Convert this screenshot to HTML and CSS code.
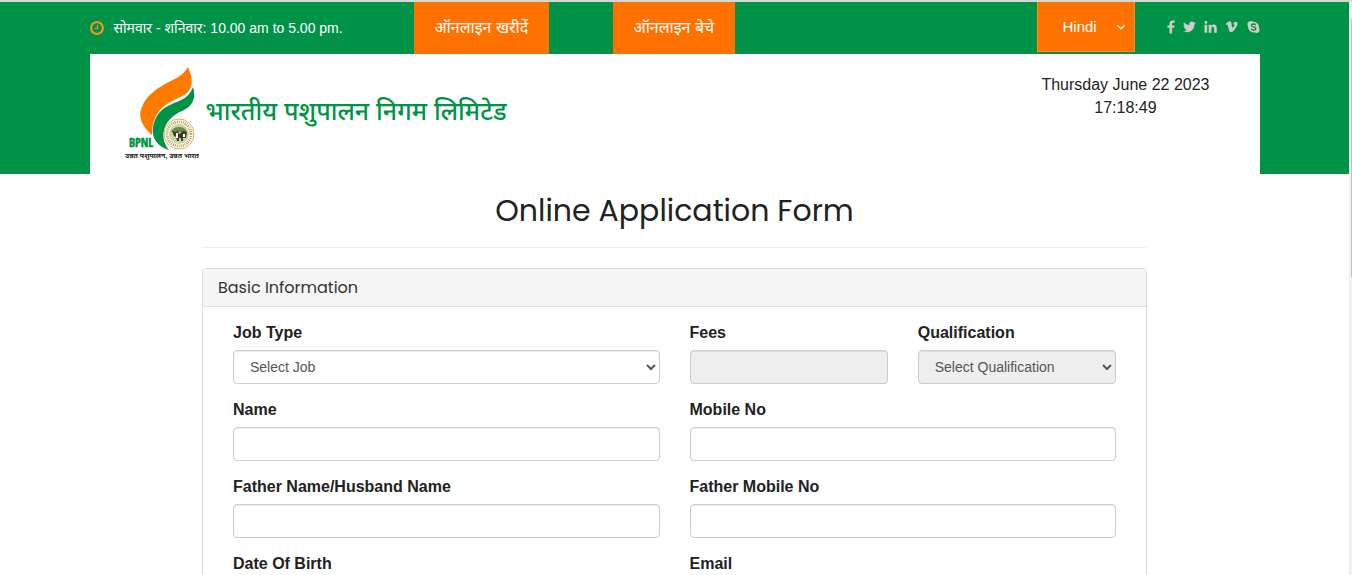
FILE: index.html
```html
<!DOCTYPE html>
<html lang="hi">
<head>
    <meta charset="UTF-8">
    <meta name="viewport" content="width=device-width, initial-scale=1.0">
    <title>Online Application Form</title>
    <link rel="stylesheet" href="styles.css">
</head>
<body>
    <header class="site-header">
        <div class="container topbar">
            <div class="hours">
                <svg class="clock" viewBox="0 0 14 14" aria-hidden="true">
                    <circle cx="7" cy="7" r="5.9" fill="none" stroke="currentColor" stroke-width="2.1"/>
                    <path d="M7.5 3.8v3.7H4.6" fill="none" stroke="currentColor" stroke-width="1.1"/>
                </svg>
                <span>सोमवार - शनिवार: 10.00 am to 5.00 pm.</span>
            </div>
            <a class="top-btn" href="#buy">ऑनलाइन खरीदें</a>
            <a class="top-btn" href="#sell">ऑनलाइन बेचे</a>
            <button class="lang" type="button">Hindi
                <svg viewBox="0 0 10 6" aria-hidden="true"><path d="M1.4 1.2L5 4.7l3.6-3.5" fill="none" stroke="currentColor" stroke-width="1.4"/></svg>
            </button>
            <nav class="social" aria-label="Social">
                <a href="#facebook" aria-label="Facebook">
                    <svg width="8" height="14" viewBox="0 0 8 14"><path d="M7.6.6v2.1H6.3c-1 0-1.2.5-1.2 1.2v1.5h2.4l-.3 2.4H5.1V13.5H2.5V7.8H.4V5.4h2.1V3.6C2.5 1.5 3.8.4 5.7.4c.9 0 1.6.1 1.9.2z"/></svg>
                </a>
                <a href="#twitter" aria-label="Twitter">
                    <svg width="13" height="14" viewBox="0 0 13 14"><path d="M12.7 3.1c-.4.5-.8.9-1.3 1.3v.3c0 3.5-2.7 7.5-7.5 7.5-1.5 0-2.9-.4-3.9-1.2 1.4.1 2.8-.2 3.9-1.1-1.2 0-2.2-.8-2.5-1.8.4.1.8.1 1.2-.1C1.4 7.8.5 6.7.5 5.4c.4.2.8.3 1.2.3C.5 4.8.2 3.4.9 2.2c1.3 1.6 3.2 2.6 5.4 2.7C5.9 3.1 7.2 1.6 8.9 1.6c.8 0 1.4.3 1.9.8.6-.1 1.2-.3 1.7-.6-.2.6-.6 1.1-1.2 1.5.5-.1 1-.2 1.4-.2z"/></svg>
                </a>
                <a href="#linkedin" aria-label="LinkedIn">
                    <svg width="13" height="14" viewBox="0 0 13 14"><path d="M.5 4.8h2.7v8H.5zM1.9 1c.9 0 1.5.6 1.5 1.4s-.6 1.4-1.5 1.4S.4 3.2.4 2.4 1 1 1.9 1zM4.7 4.8h2.7v1.1c.4-.6 1-1.3 2.4-1.3 1.8 0 3 1.2 3 3.6v4.6h-2.7V8.5c0-1.1-.4-1.8-1.3-1.8s-1.4.7-1.4 1.6v4.5H4.7z"/></svg>
                </a>
                <a href="#vimeo" aria-label="Vimeo">
                    <svg width="13" height="14" viewBox="0 0 13 14"><path d="M12.5 4.1c-.1 1.2-.9 2.8-2.5 4.9-1.6 2.2-3 3.2-4.2 3.2-.7 0-1.3-.7-1.8-2L3 6.5C2.7 5.2 2.3 4.5 2 4.5c-.1 0-.4.2-.9.6L.5 4.3C1.3 3.6 2.1 2.8 2.9 2.1c1-.9 1.7-1 2.1-.9.8.1 1.3.8 1.5 2 .5 3.5.8 4.4 1.2 4.4.3 0 .8-.5 1.5-1.5.6-1 .5-1.9-.4-1.9-.3 0-.5 0-.8.2.5-1.9 1.6-2.8 3.1-2.7 1.1 0 1.5.8 1.4 2.4z"/></svg>
                </a>
                <a href="#skype" aria-label="Skype">
                    <svg width="13" height="14" viewBox="0 0 13 14"><path d="M4 1c.8 0 1.5.3 2.1.7A5.6 5.6 0 0 1 12 7.9 3.3 3.3 0 0 1 9.5 13c-.8 0-1.5-.3-2-.7A5.6 5.6 0 0 1 1 6.1 3.3 3.3 0 0 1 4 1z"/><path class="skype-s" d="M8.7 5.1C8.3 4.3 7.4 4 6.5 4c-1.1 0-2 .5-2 1.4 0 2.1 4.3.9 4.3 3 0 1-.9 1.6-2.2 1.6-1.2 0-2.2-.4-2.5-1.4"/></svg>
                </a>
            </nav>
        </div>

        <div class="container masthead">
            <a class="brand" href="#home">
                <svg class="logo" viewBox="0 0 82 96" role="img" aria-label="BPNL">
                    <path fill="#ff7a00" d="M66 1C72 14 71 24 62 29C53 34 46 36 40 42C33 49 30 57 30 69C22 62 15 52 20 41C24 30 33 24 43 18C52 13 60 11 66 1Z"/>
                    <path fill="#009347" d="M71 21C75 34 69 41 60 45C51 49 46 54 43 61C40 69 41 77 47 84C36 81 29 72 31 61C33 49 40 42 50 38C59 34 67 32 71 21Z"/>
                    <circle cx="57" cy="68" r="15" fill="#fff" stroke="#d8b25a"/>
                    <circle cx="57" cy="68" r="12" fill="none" stroke="#b7a064" stroke-width="3" stroke-dasharray="1 1"/>
                    <circle cx="57" cy="68" r="10" fill="#c9d49a"/>
                    <path fill="#6d8a45" d="M49 66q2-5 8-5t8 5z"/>
                    <path fill="#3c3a33" d="M50 65l3 1 3-1 1 3 4-3 4 1-1 6h-3v3h-2v-3h-2v3h-2l-1-4-2-1z"/>
                    <path fill="#fff" d="M54 67h2v5h-2zM61 68h2v3h-2z"/>
                    <text class="logo-name" x="7" y="81">BPNL</text>
                    <text class="logo-motto" x="40" y="92" text-anchor="middle">उन्नत पशुपालन, उन्नत भारत</text>
                </svg>
                <span class="brand-name">भारतीय पशुपालन निगम लिमिटेड</span>
            </a>
            <div class="clock-text">
                <div>Thursday June 22 2023</div>
                <div>17:18:49</div>
            </div>
        </div>
    </header>

    <main class="form-wrap">
        <h1>Online Application Form</h1>
        <form class="panel">
            <h2 class="panel-heading">Basic Information</h2>
            <div class="panel-body">
                <div class="field wide">
                    <label for="job">Job Type</label>
                    <select id="job" class="form-control"><option>Select Job</option></select>
                </div>
                <div class="field">
                    <label for="fees">Fees</label>
                    <input id="fees" class="form-control" type="text" readonly>
                </div>
                <div class="field">
                    <label for="qualification">Qualification</label>
                    <select id="qualification" class="form-control" disabled><option>Select Qualification</option></select>
                </div>
                <div class="field wide">
                    <label for="name">Name</label>
                    <input id="name" class="form-control" type="text">
                </div>
                <div class="field wide">
                    <label for="mobile">Mobile No</label>
                    <input id="mobile" class="form-control" type="text">
                </div>
                <div class="field wide">
                    <label for="father">Father Name/Husband Name</label>
                    <input id="father" class="form-control" type="text">
                </div>
                <div class="field wide">
                    <label for="father-mobile">Father Mobile No</label>
                    <input id="father-mobile" class="form-control" type="text">
                </div>
                <div class="field wide">
                    <label for="dob">Date Of Birth</label>
                    <input id="dob" class="form-control" type="text">
                </div>
                <div class="field wide">
                    <label for="email">Email</label>
                    <input id="email" class="form-control" type="text">
                </div>
            </div>
        </form>
    </main>
    <div class="scroll-track"><div class="scroll-thumb"></div></div>
</body>
</html>
```
FILE: styles.css
```css
* {
    box-sizing: border-box;
}
html {
    scrollbar-width: none;
}
body {
    margin: 0;
    padding-right: 3px;
    border-top: 2px solid #d5dad8;
    background-color: #fff;
    color: #222;
    font-family: "Liberation Sans", Arial, "Noto Sans Devanagari", "Noto Sans", sans-serif;
    font-size: 16px;
    line-height: 23px;
}
a {
    color: inherit;
    text-decoration: none;
}
.container {
    max-width: 1170px;
    margin: 0 auto;
}
.site-header {
    background-color: #009347;
}
.topbar {
    display: grid;
    grid-template-columns: 324px 199px 1fr 98px 125px;
    align-items: start;
    height: 52px;
    color: #fff;
}
.hours {
    display: flex;
    align-items: center;
    gap: 10px;
    height: 52px;
    font-size: 14px;
}
.clock {
    width: 14px;
    height: 14px;
    color: #f7941d;
}
.top-btn {
    justify-self: start;
    padding: 0 21px;
    background-color: #ff7200;
    line-height: 52px;
}
.lang {
    display: flex;
    align-items: center;
    justify-content: space-between;
    height: 50px;
    padding: 0 8px 0 25px;
    border: 1px solid #ff8a1f;
    border-top: 0;
    background-color: #ff7200;
    color: #fff;
    font: inherit;
    font-size: 15px;
}
.lang svg {
    width: 10px;
    height: 6px;
}
.social {
    display: flex;
    align-items: center;
    justify-content: space-between;
    height: 50px;
    padding-left: 32px;
}
.social svg {
    display: block;
    fill: #ccc;
}
.social .skype-s {
    fill: none;
    stroke: #009347;
    stroke-width: 1.3;
}
.masthead {
    display: flex;
    justify-content: space-between;
    height: 120px;
    padding: 12px 50px 0 32px;
    background-color: #fff;
}
.brand {
    display: flex;
    align-items: flex-start;
    gap: 2px;
}
.logo {
    width: 82px;
    height: 96px;
}
.logo-name {
    fill: #009347;
    stroke: #009347;
    stroke-width: 0.5;
    font-family: "Liberation Sans Narrow", "Open Sans Condensed", "DejaVu Sans Condensed", sans-serif;
    font-size: 12px;
    font-weight: 700;
}
.logo-motto {
    fill: #222;
    font-size: 7px;
    font-weight: 700;
}
.brand-name {
    color: #009347;
    font-size: 25px;
    font-weight: 500;
    line-height: 90px;
}
.clock-text {
    padding-top: 7px;
    text-align: center;
}
.form-wrap {
    max-width: 945px;
    margin: 0 auto;
}
h1 {
    margin: 0 0 20px;
    padding: 20px 0;
    border-bottom: 1px solid #eee;
    font-family: Poppins, Inter, sans-serif;
    font-size: 30px;
    font-weight: 400;
    line-height: 33px;
    text-align: center;
}
.panel {
    border: 1px solid #ddd;
    border-radius: 4px;
    box-shadow: 0 1px 1px rgba(0, 0, 0, 0.05);
}
.panel-heading {
    margin: 0;
    padding: 10px 15px;
    border-bottom: 1px solid #ddd;
    border-radius: 3px 3px 0 0;
    background-color: #f5f5f5;
    color: #333;
    font-family: Poppins, Inter, sans-serif;
    font-size: 16px;
    font-weight: 400;
    line-height: 17px;
}
.panel-body {
    display: grid;
    grid-template-columns: repeat(4, 1fr);
    gap: 15px 30px;
    padding: 15px 30px;
}
.wide {
    grid-column: span 2;
}
.field label {
    display: block;
    margin-bottom: 7px;
    font-weight: 700;
    line-height: 21px;
}
.form-control {
    display: block;
    width: 100%;
    height: 34px;
    padding: 6px 12px;
    border: 1px solid #ccc;
    border-radius: 4px;
    background-color: #fff;
    box-shadow: inset 0 1px 1px rgba(0, 0, 0, 0.075);
    color: #555;
    font-family: inherit;
    font-size: 14px;
}
.form-control:disabled,
.form-control:read-only:not(select) {
    background-color: #eee;
    opacity: 1;
}
.scroll-track {
    position: fixed;
    top: 2px;
    right: 0;
    bottom: 0;
    width: 3px;
    padding: 17px 0 0 2px;
    background-color: #f1f1f1;
}
.scroll-thumb {
    height: 258px;
    background-color: #c1c1c1;
}
```
